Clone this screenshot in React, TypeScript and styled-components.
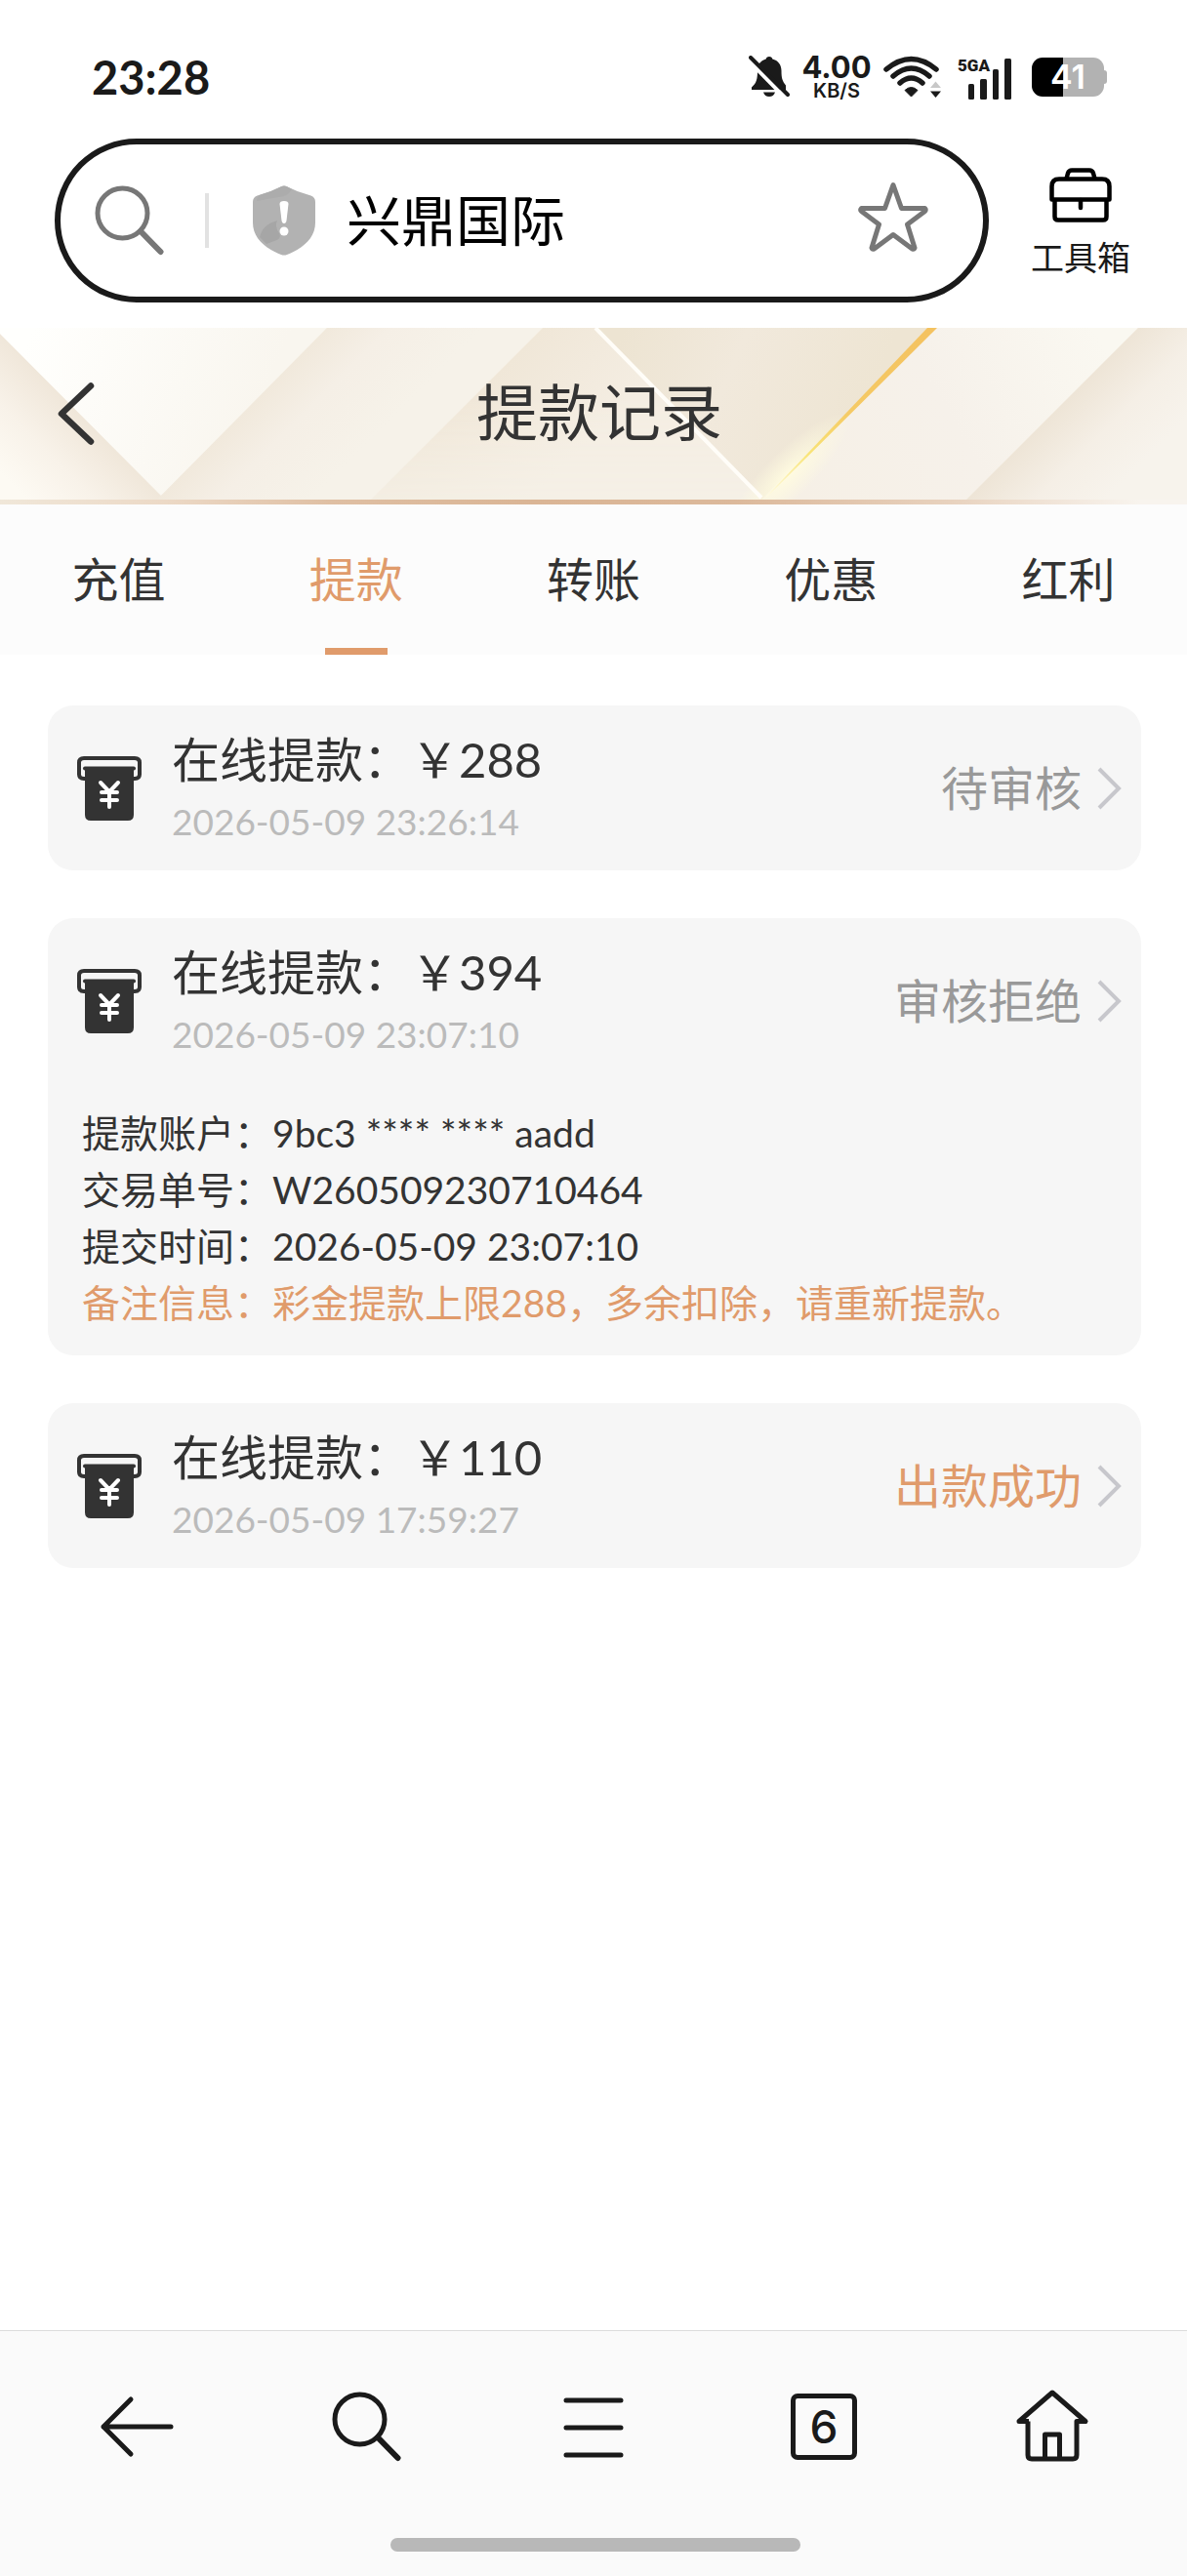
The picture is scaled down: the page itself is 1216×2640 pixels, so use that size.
import React from "react";
import styled, { createGlobalStyle } from "styled-components";

const ink = "#1a1a1a";
const textDark = "#333333";
const accent = "#e09b6b";

const GlobalStyle = createGlobalStyle`
  *, *::before, *::after { box-sizing: border-box; }
  body {
    margin: 0;
    background: #ffffff;
    color: ${textDark};
    font-family: Lato, "Noto Sans CJK SC", sans-serif;
  }
  button, input { font: inherit; color: inherit; }
  button { border: 0; padding: 0; background: none; cursor: pointer; }
  svg { display: block; flex: none; }
`;

const Page = styled.div`
  min-height: 100vh;
  display: flex;
  flex-direction: column;
`;

/* ---------- status bar ---------- */

const StatusBar = styled.div`
  height: 142px;
  padding: 16px 82px 0 94px;
  display: flex;
  align-items: center;
  justify-content: space-between;
  color: ${ink};
`;

const Clock = styled.time`
  font-size: 47px;
  line-height: 56px;
  font-weight: 700;
`;

const StatusIcons = styled.div`
  display: flex;
  align-items: center;
  gap: 12px;
`;

const Speed = styled.div`
  width: 72px;
  display: flex;
  flex-direction: column;
  align-items: center;
  font-family: Inter, sans-serif;
  font-weight: 700;
`;

const SpeedValue = styled.span`
  font-size: 31px;
  line-height: 28px;
`;

const SpeedUnit = styled.span`
  font-size: 20px;
  line-height: 20px;
  font-weight: 600;
`;

const Battery = styled.div`
  display: flex;
  align-items: center;
`;

const BatteryBody = styled.div<{ $level: number }>`
  width: 74px;
  height: 40px;
  border-radius: 11px;
  display: flex;
  align-items: center;
  justify-content: center;
  background: linear-gradient(
    90deg,
    #000000 ${(p) => p.$level}%,
    #b2b2b2 ${(p) => p.$level}%
  );
  color: #ffffff;
  font-family: Inter, sans-serif;
  font-size: 34px;
  line-height: 40px;
  font-weight: 600;
`;

const BatteryTip = styled.div`
  width: 3px;
  height: 14px;
  border-radius: 0 4px 4px 0;
  background: #b2b2b2;
`;

/* ---------- browser address row ---------- */

const AddressRow = styled.div`
  padding: 0 58px 26px 56px;
  display: flex;
  align-items: center;
  gap: 43px;
`;

const AddressPill = styled.div`
  flex: 1;
  min-width: 0;
  height: 168px;
  padding: 0 56px 0 35px;
  border: 6px solid ${ink};
  border-radius: 84px;
  display: flex;
  align-items: center;
`;

const PillDivider = styled.div`
  width: 4px;
  height: 56px;
  margin: 0 45px 0 41px;
  background: #e2e2e2;
`;

const AddressInput = styled.input`
  flex: 1;
  min-width: 0;
  height: 84px;
  margin-left: 32px;
  padding: 0;
  border: 0;
  outline: 0;
  background: none;
  color: #000000;
  font-size: 56px;
  line-height: 84px;
`;

const ToolboxButton = styled.button`
  padding-top: 8px;
  display: flex;
  flex-direction: column;
  align-items: center;
  gap: 12px;
  color: ${ink};
  font-size: 34px;
  line-height: 48px;
`;

/* ---------- page header ---------- */

const Banner = styled.header`
  position: relative;
  display: flex;
  flex-direction: column;
  background: #f6f1e8;
`;

const BannerArt = styled.svg`
  position: absolute;
  inset: 0;
  width: 100%;
  height: 100%;
`;

const BannerRow = styled.div`
  position: relative;
  height: 176px;
  display: grid;
  grid-template-columns: 132px 1fr 120px;
  align-items: center;
`;

const BackButton = styled.button`
  height: 100px;
  padding-left: 59px;
`;

const Title = styled.h1`
  margin: 0;
  padding-bottom: 4px;
  text-align: center;
  font-size: 63px;
  line-height: 92px;
  font-weight: 400;
`;

const BannerRule = styled.div`
  position: relative;
  height: 5px;
  background: linear-gradient(
    90deg,
    #f0e7d9 0%,
    #ecd9c6 14%,
    #dfbfa3 28%,
    #dab595 45%,
    #dcb99b 62%,
    #e8d2be 80%,
    #f8f4ee 96%
  );
`;

/* ---------- tabs ---------- */

const Tabs = styled.nav`
  display: grid;
  grid-template-columns: repeat(5, 1fr);
  background: #fcfcfc;
`;

const Tab = styled.button<{ $active: boolean }>`
  height: 154px;
  padding-top: 7px;
  display: flex;
  flex-direction: column;
  align-items: center;
  justify-content: space-between;
  color: ${(p) => (p.$active ? accent : textDark)};
  font-size: 48px;
  line-height: 140px;

  &::after {
    content: "";
    width: 64px;
    height: 7px;
    flex: none;
    background: ${(p) => (p.$active ? accent : "transparent")};
  }
`;

/* ---------- records ---------- */

const RecordList = styled.main`
  flex: 1;
  padding: 52px 47px 48px 49px;
  display: flex;
  flex-direction: column;
  gap: 49px;
`;

const Card = styled.article`
  border-radius: 26px;
  background: #f6f6f6;
`;

const CardHead = styled.button`
  width: 100%;
  height: 169px;
  padding: 0 20px 0 30px;
  display: flex;
  align-items: center;
  text-align: left;
`;

const CardText = styled.span`
  flex: 1;
  min-width: 0;
  margin-left: 31px;
  padding-bottom: 4px;
  display: flex;
  flex-direction: column;
`;

const CardTitle = styled.span`
  font-size: 49px;
  line-height: 72px;
`;

const CardDate = styled.span`
  color: #bbbbbb;
  font-size: 37px;
  line-height: 56px;
`;

const CardStatus = styled.span<{ $done: boolean }>`
  margin-right: 16px;
  color: ${(p) => (p.$done ? accent : "#999999")};
  font-size: 48px;
  line-height: 72px;
`;

const Details = styled.dl`
  margin: 0;
  padding: 22px 35px 25px;
`;

const DetailRow = styled.div<{ $highlight: boolean }>`
  display: flex;
  color: ${(p) => (p.$highlight ? accent : textDark)};
  font-size: 39px;
  line-height: 58px;
`;

const DetailLabel = styled.dt`
  flex: none;
`;

const DetailValue = styled.dd`
  margin: 0;
`;

/* ---------- bottom bar ---------- */

const BottomBar = styled.footer`
  border-top: 1px solid #dcdcdc;
  padding: 58px 21px 25px 25px;
  background: #fafafa;
`;

const BottomNav = styled.nav`
  display: grid;
  grid-template-columns: repeat(5, 1fr);
`;

const NavButton = styled.button`
  height: 80px;
  display: flex;
  align-items: center;
  justify-content: center;
`;

const TabCount = styled.span`
  width: 68px;
  height: 68px;
  border: 5px solid ${ink};
  border-radius: 7px;
  display: flex;
  align-items: center;
  justify-content: center;
  color: ${ink};
  font-family: Inter, sans-serif;
  font-size: 46px;
  line-height: 58px;
  font-weight: 500;
`;

const HomeIndicator = styled.div`
  width: 420px;
  max-width: 60%;
  height: 14px;
  margin: 74px auto 0;
  border-radius: 7px;
  background: #b8b8b8;
`;

/* ---------- drawings ---------- */

const BellOffIcon = () => (
  <svg width="42" height="44" viewBox="0 0 42 44" aria-hidden="true">
    <path
      d="M21 1c2 0 3 1 3.300 2.600C30 5 33.500 9.500 33.500 15.500c0 7 .8 10.500 4.500 15v4.500H3v-2.500c5-4.500 6-8.500 6-17C9 9 12.500 5 17.700 3.600 18 2 19 1 21 1z"
      fill={ink}
    />
    <path d="M15 37.500h12c-1 3.200-3 4.500-6 4.500s-5-1.300-6-4.500z" fill={ink} />
    <path d="M-1 4 37 43" stroke="#fff" strokeWidth="4" />
    <path d="M2 2 40 40" stroke={ink} strokeWidth="4" strokeLinecap="round" />
  </svg>
);

const WifiIcon = () => (
  <svg width="64" height="44" viewBox="0 0 64 44" aria-hidden="true">
    <g fill="none" stroke={ink} strokeWidth="5.500" strokeLinecap="round">
      <path d="M3 14Q28.500-7 54 14" />
      <path d="M10 21Q28.500 5 47 21" />
      <path d="M17 28Q28.500 18 40 28" />
    </g>
    <path d="M28.500 42 22 35.500q6.500-6 13 0z" fill={ink} stroke={ink} strokeLinejoin="round" />
    <path d="M53.500 26.500 59 33H48z" fill="#c8c8c8" />
    <path d="M53.500 43 59 36.500H48z" fill={ink} />
  </svg>
);

const SignalIcon = () => (
  <svg width="64" height="48" viewBox="0 -4 64 48" role="img" aria-label="5GA">
    <text
      x="0"
      y="14"
      fill={ink}
      fontFamily="Roboto, sans-serif"
      fontSize="17"
      fontWeight="900"
    >
      5GA
    </text>
    <g fill={ink}>
      <rect x="11" y="27" width="6" height="16" rx="1.500" />
      <rect x="23" y="22" width="7" height="21" rx="1.500" />
      <rect x="36" y="12" width="6" height="31" rx="1.500" />
      <rect x="48" y="1" width="7" height="42" rx="1.500" />
    </g>
  </svg>
);

const SearchIcon = ({ color }: { color: string }) => (
  <svg width="72" height="72" viewBox="0 0 72 72" fill="none" stroke={color} aria-hidden="true">
    <circle cx="28.500" cy="28.500" r="25.500" strokeWidth="5" />
    <path d="M47 47 67.500 68" strokeWidth="6" strokeLinecap="round" />
  </svg>
);

const ShieldIcon = () => (
  <svg width="64" height="72" viewBox="0 0 64 72" aria-hidden="true">
    <path
      d="M29 1.200q3-1.600 6 0Q46 7 59.500 10.500 64 12 64 17v21C64 54 52 64 35 71q-3 1.200-6 0C12 64 0 54 0 38V17q0-5 4.500-6.500Q18 7 29 1.200z"
      fill="#b2b2b2"
    />
    <path d="M29 1.200q3-1.600 6 0L40 4q-5 8-13 8L4 16q0-4 3-6Q18 7 29 1.200z" fill="#acacac" />
    <path d="M7 53q3-13 18-17-3 6 2 13 3 6-5 8l-8 3z" fill="#a6a6a6" />
    <path d="M27.500 19q0-3 4.500-3t4.500 3L34.500 36q-.5 3-2.500 3t-2.500-3z" fill="#fff" />
    <circle cx="32" cy="47" r="4.500" fill="#fff" />
  </svg>
);

const StarIcon = () => (
  <svg width="72" height="80" viewBox="0 0 72 80" aria-hidden="true">
    <path
      d="M36 3.500 44.500 27.500H68.500Q70 29 68.500 30.500L50.500 44 58 68Q57.500 69.500 55.500 69L36 54.500 16.500 69Q14.500 69.500 14 68L21.500 44 3.500 30.500Q2 29 3.500 27.500H27.500z"
      fill="none"
      stroke="#777"
      strokeWidth="5"
      strokeLinejoin="round"
    />
  </svg>
);

const ToolboxIcon = () => (
  <svg
    width="64"
    height="56"
    viewBox="0 0 64 56"
    fill="none"
    stroke="#000"
    strokeWidth="4.500"
    strokeLinejoin="round"
    aria-hidden="true"
  >
    <path d="M17.500 11 19 5.500Q20 2.500 23 2.500H41Q44 2.500 45 5.500L46.500 11" />
    <path d="M2.500 32.500V19Q2.500 11.500 10 11.500H54Q61.500 11.500 61.500 19V32.500z" />
    <path d="M5.500 32.500V50Q5.500 53.500 9 53.500H55Q58.500 53.500 58.500 50V32.500" />
    <path d="M32 33V41" strokeLinecap="round" />
  </svg>
);

const BackChevron = () => (
  <svg width="38" height="64" viewBox="0 0 38 64" fill="none" aria-hidden="true">
    <path
      d="M34 3.500 4 32 34 60.500"
      stroke={textDark}
      strokeWidth="6.500"
      strokeLinecap="round"
      strokeLinejoin="round"
    />
  </svg>
);

const WithdrawIcon = () => (
  <svg width="66" height="66" viewBox="0 0 66 66" fill="none" aria-hidden="true">
    <path
      d="M8 23H7Q2 23 2 18.500V6.500Q2 2 7 2H59Q64 2 64 6.500V18.500Q64 23 59 23H58"
      stroke={textDark}
      strokeWidth="4"
    />
    <path d="M8 12.500H58" stroke={textDark} strokeWidth="4" strokeLinecap="round" />
    <path d="M8 12H58V60Q58 66 52 66H14Q8 66 8 60z" fill={textDark} />
    <path
      d="M24 27 33 36.500 42 27M25 37H41M25 45H41M33 37V52"
      stroke="#fff"
      strokeWidth="4"
      strokeLinecap="round"
    />
  </svg>
);

const RowChevron = () => (
  <svg width="25" height="44" viewBox="0 0 25 44" fill="none" aria-hidden="true">
    <path d="M2 2 22 22 2 42" stroke="#c7c7cc" strokeWidth="4" />
  </svg>
);

const ArrowLeftIcon = () => (
  <svg width="80" height="64" viewBox="0 0 80 64" fill="none" aria-hidden="true">
    <path
      d="M32 4 4 32 32 60M4 32H73"
      stroke={ink}
      strokeWidth="5"
      strokeLinecap="round"
      strokeLinejoin="round"
    />
  </svg>
);

const MenuIcon = () => (
  <svg width="66" height="64" viewBox="0 0 66 64" fill="none" aria-hidden="true">
    <path d="M3 5H59M3 33H59M3 61H59" stroke={ink} strokeWidth="5" strokeLinecap="round" />
  </svg>
);

const HomeIcon = () => (
  <svg width="82" height="78" viewBox="0 0 82 78" fill="none" aria-hidden="true">
    <path
      d="M17 33.500H7L41 4 75 33.500H66V68Q66 72 62 72H20Q16 72 16 68V33.500"
      stroke={ink}
      strokeWidth="5"
      strokeLinejoin="round"
    />
    <path d="M33.500 71V47H48.500V71" stroke={ink} strokeWidth="5" strokeLinejoin="round" />
  </svg>
);

const BannerBackground = () => (
  <BannerArt viewBox="0 0 1216 181" preserveAspectRatio="none" aria-hidden="true">
    <defs>
      <linearGradient id="foldLeft" gradientUnits="userSpaceOnUse" x1="82" y1="90" x2="12" y2="160">
        <stop offset="0" stopColor="#f0e7da" />
        <stop offset=".5" stopColor="#f8f2e9" />
        <stop offset="1" stopColor="#fdfaf3" />
      </linearGradient>
      <linearGradient id="foldWhite" gradientUnits="userSpaceOnUse" x1="30" y1="10" x2="250" y2="110">
        <stop offset="0" stopColor="#fffffd" />
        <stop offset="1" stopColor="#f9f6ef" />
      </linearGradient>
      <linearGradient id="foldSand" gradientUnits="userSpaceOnUse" x1="250" y1="86" x2="330" y2="166">
        <stop offset="0" stopColor="#f1e9dc" />
        <stop offset=".4" stopColor="#f5efe6" />
        <stop offset="1" stopColor="#f6f2e9" />
      </linearGradient>
      <linearGradient id="foldMid" gradientUnits="userSpaceOnUse" x1="478" y1="78" x2="560" y2="160">
        <stop offset="0" stopColor="#f0e7d8" />
        <stop offset="1" stopColor="#f4ede2" />
      </linearGradient>
      <linearGradient id="foldFade" x1="0" y1="0" x2="0" y2="1">
        <stop offset="0" stopColor="#fff" />
        <stop offset=".4" stopColor="#fff" />
        <stop offset="1" stopColor="#555" />
      </linearGradient>
      <mask id="foldMask" maskUnits="userSpaceOnUse" x="370" y="0" width="430" height="181">
        <rect x="370" y="0" width="430" height="181" fill="url(#foldFade)" />
      </mask>
      <linearGradient id="foldDeep" gradientUnits="userSpaceOnUse" x1="640" y1="0" x2="880" y2="100">
        <stop offset="0" stopColor="#ede4d2" />
        <stop offset=".45" stopColor="#f1e9dc" />
        <stop offset="1" stopColor="#eee5d3" />
      </linearGradient>
      <linearGradient id="foldRight" gradientUnits="userSpaceOnUse" x1="820" y1="170" x2="1120" y2="0">
        <stop offset="0" stopColor="#f6f0e6" />
        <stop offset=".5" stopColor="#f6f1ea" />
        <stop offset="1" stopColor="#faf8f1" />
      </linearGradient>
      <linearGradient id="foldEnd" gradientUnits="userSpaceOnUse" x1="1080" y1="88" x2="1150" y2="158">
        <stop offset="0" stopColor="#eee5d7" />
        <stop offset=".5" stopColor="#f5efe6" />
        <stop offset="1" stopColor="#f7f3ec" />
      </linearGradient>
      <linearGradient id="gold" gradientUnits="userSpaceOnUse" x1="955" y1="0" x2="785" y2="172">
        <stop offset="0" stopColor="#f4c260" />
        <stop offset=".5" stopColor="#f5ca65" />
        <stop offset=".75" stopColor="#f9e478" />
        <stop offset="1" stopColor="#fffbe2" />
      </linearGradient>
      <radialGradient id="glow">
        <stop offset="0" stopColor="#fffbe0" />
        <stop offset="1" stopColor="#fffbe0" stopOpacity="0" />
      </radialGradient>
    </defs>
    <rect width="1216" height="181" fill="#f6f1e8" />
    <path d="M0 6 175 181H0z" fill="url(#foldLeft)" />
    <path d="M0 0H335L165 172 0 6z" fill="url(#foldWhite)" />
    <path d="M335 0H620L790 181H156z" fill="url(#foldSand)" />
    <path d="M556 0H612L790 181H375z" fill="url(#foldMid)" mask="url(#foldMask)" />
    <path d="M612 0H955L780 176z" fill="url(#foldDeep)" />
    <path d="M957 0H1166L985 181H776z" fill="url(#foldRight)" />
    <path d="M1166 0H1216V181H985z" fill="url(#foldEnd)" />
    <ellipse cx="0" cy="0" rx="85" ry="24" transform="translate(808 150) rotate(-45)" fill="url(#glow)" />
    <path d="M610 0 780 174" stroke="#fffdf8" strokeWidth="4" />
    <path d="M950 0H960L788 171 784 174z" fill="url(#gold)" />
  </BannerArt>
);

/* ---------- data ---------- */

const tabs = ["充值", "提款", "转账", "优惠", "红利"];

type Detail = { label: string; value: string; highlight?: boolean };
type WithdrawRecord = {
  amount: string;
  date: string;
  status: string;
  done?: boolean;
  details?: Detail[];
};

const records: WithdrawRecord[] = [
  { amount: "288", date: "2026-05-09 23:26:14", status: "待审核" },
  {
    amount: "394",
    date: "2026-05-09 23:07:10",
    status: "审核拒绝",
    details: [
      { label: "提款账户：", value: "9bc3 **** **** aadd" },
      { label: "交易单号：", value: "W260509230710464" },
      { label: "提交时间：", value: "2026-05-09 23:07:10" },
      { label: "备注信息：", value: "彩金提款上限288，多余扣除，请重新提款。", highlight: true },
    ],
  },
  { amount: "110", date: "2026-05-09 17:59:27", status: "出款成功", done: true },
];

const RecordCard = ({ record }: { record: WithdrawRecord }) => (
  <Card>
    <CardHead type="button" aria-expanded={Boolean(record.details)}>
      <WithdrawIcon />
      <CardText>
        <CardTitle>在线提款：￥{record.amount}</CardTitle>
        <CardDate>{record.date}</CardDate>
      </CardText>
      <CardStatus $done={Boolean(record.done)}>{record.status}</CardStatus>
      <RowChevron />
    </CardHead>
    {record.details && (
      <Details>
        {record.details.map((d) => (
          <DetailRow key={d.label} $highlight={Boolean(d.highlight)}>
            <DetailLabel>{d.label}</DetailLabel>
            <DetailValue>{d.value}</DetailValue>
          </DetailRow>
        ))}
      </Details>
    )}
  </Card>
);

export default function App() {
  const [active, setActive] = React.useState("提款");

  return (
    <Page lang="zh-CN">
      <GlobalStyle />
      <StatusBar>
        <Clock>23:28</Clock>
        <StatusIcons>
          <BellOffIcon />
          <Speed>
            <SpeedValue>4.00</SpeedValue>
            <SpeedUnit>KB/S</SpeedUnit>
          </Speed>
          <WifiIcon />
          <SignalIcon />
          <Battery>
            <BatteryBody $level={43}>41</BatteryBody>
            <BatteryTip />
          </Battery>
        </StatusIcons>
      </StatusBar>

      <AddressRow>
        <AddressPill>
          <SearchIcon color="#777777" />
          <PillDivider />
          <ShieldIcon />
          <AddressInput type="text" aria-label="地址栏" defaultValue="兴鼎国际" />
          <button type="button" aria-label="收藏">
            <StarIcon />
          </button>
        </AddressPill>
        <ToolboxButton type="button">
          <ToolboxIcon />
          工具箱
        </ToolboxButton>
      </AddressRow>

      <Banner>
        <BannerBackground />
        <BannerRow>
          <BackButton type="button" aria-label="返回">
            <BackChevron />
          </BackButton>
          <Title>提款记录</Title>
        </BannerRow>
        <BannerRule />
      </Banner>

      <Tabs>
        {tabs.map((name) => (
          <Tab key={name} type="button" $active={name === active} onClick={() => setActive(name)}>
            {name}
          </Tab>
        ))}
      </Tabs>

      <RecordList>
        {records.map((r) => (
          <RecordCard key={r.date} record={r} />
        ))}
      </RecordList>

      <BottomBar>
        <BottomNav>
          <NavButton type="button" aria-label="后退">
            <ArrowLeftIcon />
          </NavButton>
          <NavButton type="button" aria-label="搜索">
            <SearchIcon color={ink} />
          </NavButton>
          <NavButton type="button" aria-label="菜单">
            <MenuIcon />
          </NavButton>
          <NavButton type="button">
            <TabCount>6</TabCount>
          </NavButton>
          <NavButton type="button" aria-label="主页">
            <HomeIcon />
          </NavButton>
        </BottomNav>
        <HomeIndicator />
      </BottomBar>
    </Page>
  );
}
